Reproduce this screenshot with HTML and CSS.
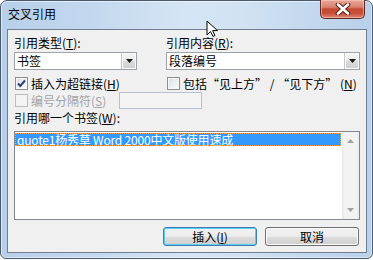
FILE: index.html
```html
<!DOCTYPE html>
<html lang="zh-CN">
<head>
<meta charset="utf-8">
<title>交叉引用</title>
<link rel="stylesheet" href="styles.css">
</head>
<body>
<div class="window">
  <div class="titlebar">
    <span class="title">交叉引用</span>
    <div class="close">
      <svg width="18" height="12" viewBox="0 0 18 12">
        <path d="M4 1.5 L14 10.5 M14 1.5 L4 10.5" stroke="#5b2119" stroke-width="4.6" stroke-linecap="round"/>
        <path d="M4 1.5 L14 10.5 M14 1.5 L4 10.5" stroke="#ffffff" stroke-width="2.6" stroke-linecap="round"/>
      </svg>
    </div>
  </div>
  <div class="client">
    <div class="top">
      <div class="field">
        <div class="label">引用类型(<u>T</u>):</div>
        <div class="combo">
          <span class="value">书签</span>
          <span class="drop"><svg width="7" height="4" viewBox="0 0 7 4"><path d="M0 0 H7 L3.5 4 Z" fill="#1a1a1a"/></svg></span>
        </div>
      </div>
      <div class="field">
        <div class="label">引用内容(<u>R</u>):</div>
        <div class="combo">
          <span class="value">段落编号</span>
          <span class="drop"><svg width="7" height="4" viewBox="0 0 7 4"><path d="M0 0 H7 L3.5 4 Z" fill="#1a1a1a"/></svg></span>
        </div>
      </div>
      <div class="check">
        <span class="box"><svg width="11" height="11" viewBox="0 0 11 11"><path d="M2 5.5 L4.3 8 L9 2.5" fill="none" stroke="#2b3f7a" stroke-width="2"/></svg></span>
        <span>插入为超链接(<u>H</u>)</span>
      </div>
      <div class="check">
        <span class="box"></span>
        <span>包括<span class="fw">“</span>见上方<span class="fw">”</span> / <span class="fw">“</span>见下方<span class="fw">”</span> (<u>N</u>)</span>
      </div>
      <div class="sep-row">
        <div class="check disabled">
          <span class="box"></span>
          <span>编号分隔符(<u>S</u>)</span>
        </div>
        <div class="textbox"></div>
      </div>
    </div>
    <div class="label list-label">引用哪一个书签(<u>W</u>):</div>
    <div class="list">
      <div class="items">
        <div class="item selected">quote1杨秀草 Word 2000中文版使用速成</div>
      </div>
      <div class="scrollbar">
        <svg width="7" height="4" viewBox="0 0 7 4"><path d="M0 4 H7 L3.5 0 Z" fill="#a2a2a2"/></svg>
        <svg width="7" height="4" viewBox="0 0 7 4"><path d="M0 0 H7 L3.5 4 Z" fill="#a2a2a2"/></svg>
      </div>
    </div>
    <div class="buttons">
      <button class="btn default">插入(<u>I</u>)</button>
      <button class="btn">取消</button>
    </div>
  </div>
  <svg class="cursor" width="14" height="18" viewBox="0 0 14 18">
    <path d="M1 1 L1 15 L4.5 11.5 L7 16.5 L9 15.5 L6.6 10.6 L11.5 10.6 Z" fill="#ffffff" stroke="#000000" stroke-width="1" stroke-linejoin="miter"/>
  </svg>
</div>
</body>
</html>
```

FILE: styles.css
```css
* {
  box-sizing: border-box;
}

html,
body {
  margin: 0;
  padding: 0;
  background: #ffffff;
}

body {
  width: 373px;
  height: 260px;
  overflow: hidden;
  font-family: "Noto Sans CJK SC", "Microsoft YaHei", sans-serif;
  font-size: 12px;
  line-height: 14px;
  color: #000000;
}

u {
  text-decoration: underline;
  text-underline-offset: 1px;
}

.window {
  position: relative;
  width: 373px;
  height: 259px;
  border: 1px solid #4a5a6e;
  border-radius: 7px 7px 6px 6px;
  background: linear-gradient(90deg, #b7cfe9 0%, #c3d8ef 25%, #d6e5f5 50%, #d2e2f3 65%, #c2d7ee 85%, #b9d0ea 100%);
  box-shadow: inset 0 0 0 1px rgba(255, 255, 255, 0.55);
  display: flex;
  flex-direction: column;
}

.titlebar {
  height: 28px;
  display: flex;
  justify-content: space-between;
  align-items: flex-start;
}

.title {
  margin: 5px 0 0 7px;
  font-size: 12px;
  line-height: 15px;
  color: #000000;
}

.close {
  width: 45px;
  height: 19px;
  margin: -1px 7px 0 0;
  border: 1px solid #5e2a24;
  border-top: none;
  border-radius: 0 0 5px 5px;
  background: linear-gradient(#e8a898 0%, #d9826f 40%, #c24a33 50%, #c9503b 75%, #dd8a74 100%);
  box-shadow: inset 0 0 0 1px rgba(255, 210, 200, 0.5);
  display: flex;
  align-items: center;
  justify-content: center;
}

.client {
  flex: 1;
  margin: 0 5px 5px 6px;
  border: 1px solid #707e8f;
  background: #f0f0f0;
  padding: 6px 6px 6px 6px;
  display: flex;
  flex-direction: column;
}

.top {
  display: grid;
  grid-template-columns: 123px 1fr;
  column-gap: 29px;
}

.label {
  height: 14px;
  line-height: 14px;
  white-space: nowrap;
}

.field .label {
  margin-bottom: 2px;
}

.combo {
  height: 18px;
  border: 1px solid #9ea3aa;
  background: #ffffff;
  display: flex;
  align-items: center;
  margin-bottom: 6px;
}

.combo .value {
  padding-left: 2px;
  line-height: 16px;
}

.drop {
  margin-left: auto;
  width: 15px;
  height: 16px;
  border-left: 1px solid #c3c6ca;
  background: linear-gradient(#f6f6f6 0%, #e9e9e9 50%, #dadada 51%, #d0d0d0 100%);
  box-shadow: inset 0 0 0 1px #fafafa;
  display: flex;
  align-items: center;
  justify-content: center;
}

.check {
  height: 15px;
  display: flex;
  align-items: center;
  gap: 3px;
  padding-left: 1px;
  white-space: nowrap;
}

.box {
  width: 13px;
  height: 13px;
  flex: none;
  border: 1px solid #8e8f8f;
  background: linear-gradient(135deg, #d9dbdd 0%, #eef0f2 55%, #fdfdfd 100%);
  box-shadow: inset 0 0 0 1px #f6f6f6;
  display: flex;
  align-items: center;
  justify-content: center;
}

.fw {
  font-feature-settings: "fwid";
}

.sep-row {
  grid-column: 1 / 3;
  margin-top: 1px;
  height: 17px;
  display: grid;
  grid-template-columns: 105px 83px;
  align-items: center;
}

.check.disabled {
  color: #a3a3a3;
}

.check.disabled .box {
  border-color: #bcbcbc;
  background: #f4f4f4;
  box-shadow: none;
}

.textbox {
  height: 17px;
  border: 1px solid #b4c2d3;
  background: #f4f4f4;
}

.list-label {
  margin-top: 2px;
}

.list {
  margin-top: 6px;
  height: 89px;
  border: 1px solid #828790;
  background: #ffffff;
  display: flex;
}

.items {
  flex: 1;
  padding-top: 1px;
}

.item {
  height: 13px;
  line-height: 13px;
  padding-left: 2px;
  margin-right: 1px;
  white-space: nowrap;
  letter-spacing: -0.2px;
}

.item.selected {
  background: #3399ff;
  color: #ffffff;
  outline: 1px dotted #ff9d3c;
  outline-offset: -1px;
}

.scrollbar {
  width: 17px;
  flex: none;
  background: linear-gradient(90deg, #e6e6e6 0%, #f3f3f3 12%, #f3f3f3 88%, #e6e6e6 100%);
  display: flex;
  flex-direction: column;
  align-items: center;
  justify-content: space-between;
  padding: 7px 0;
}

.buttons {
  margin-top: 7px;
  height: 19px;
  display: flex;
  justify-content: flex-end;
  gap: 8px;
  padding-right: 1px;
}

.btn {
  width: 94px;
  height: 19px;
  padding: 0;
  font-family: inherit;
  font-size: 12px;
  line-height: 17px;
  color: #000000;
  border: 1px solid #707070;
  border-radius: 3px;
  background: linear-gradient(#f2f2f2 0%, #ebebeb 50%, #dddddd 51%, #cfcfcf 100%);
  box-shadow: inset 0 0 0 1px #fbfbfb;
}

.btn.default {
  border-color: #3c7fb1;
  box-shadow: inset 0 0 0 1px #5ccbf5;
}

.cursor {
  position: absolute;
  left: 205px;
  top: 19px;
}
```
